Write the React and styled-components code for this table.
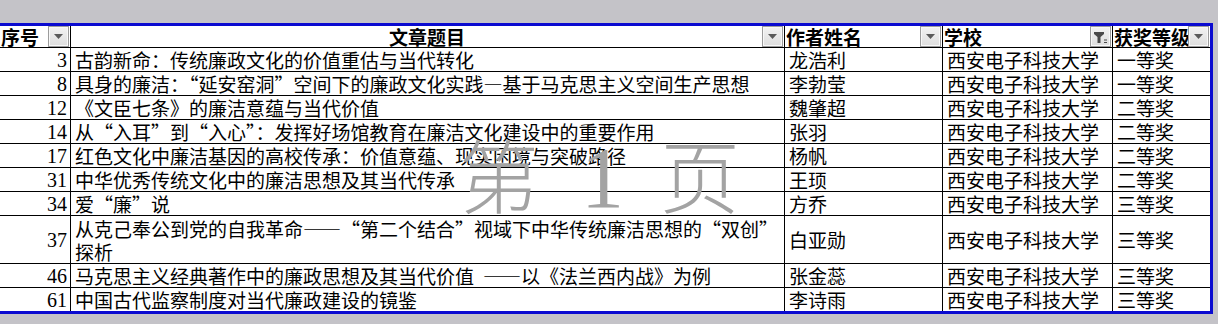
import React from 'react';
import styled, { createGlobalStyle } from 'styled-components';

const rows = [
  { no: 3, title: '古韵新命：传统廉政文化的价值重估与当代转化', name: '龙浩利', award: '一等奖' },
  { no: 8, title: '具身的廉洁：“延安窑洞”空间下的廉政文化实践—基于马克思主义空间生产思想', name: '李勃莹', award: '一等奖' },
  { no: 12, title: '《文臣七条》的廉洁意蕴与当代价值', name: '魏肇超', award: '二等奖' },
  { no: 14, title: '从“入耳”到“入心”：发挥好场馆教育在廉洁文化建设中的重要作用', name: '张羽', award: '二等奖' },
  { no: 17, title: '红色文化中廉洁基因的高校传承：价值意蕴、现实困境与突破路径', name: '杨帆', award: '二等奖' },
  { no: 31, title: '中华优秀传统文化中的廉洁思想及其当代传承', name: '王顼', award: '二等奖' },
  { no: 34, title: '爱“廉”说', name: '方乔', award: '三等奖' },
  { no: 37, title: ['从克己奉公到党的自我革命——“第二个结合”视域下中华传统廉洁思想的“双创”', '探析'], name: '白亚勋', award: '三等奖', tall: true },
  { no: 46, title: '马克思主义经典著作中的廉政思想及其当代价值 ——以《法兰西内战》为例', name: '张金蕊', award: '三等奖' },
  { no: 61, title: '中国古代监察制度对当代廉政建设的镜鉴', name: '李诗雨', award: '三等奖' },
];

const GlobalStyle = createGlobalStyle`
  *, *::before, *::after { box-sizing: border-box; }
  html, body { margin: 0; padding: 0; background: #c4c3c8; }
  body { font-family: "Noto Sans CJK SC", sans-serif; color: #000; }
`;

const Page = styled.div`
  width: 1218px;
  height: 324px;
  overflow: hidden;
  padding-top: 23px;
`;

const Sheet = styled.div`
  position: relative;
  width: 1213px;
  background: #fff;
  border-top: 3px solid #0a0ad0;
  border-right: 3px solid #0a0ad0;
  border-bottom: 3px solid #0a0ad0;
`;

const Row = styled.div`
  display: grid;
  grid-template-columns: 71px 714px 158px 170px 97px;
  height: ${p => p.$h}px;
  border-bottom: ${p => (p.$last ? 'none' : '1px solid #000')};
`;

const Cell = styled.div`
  position: relative;
  display: flex;
  align-items: center;
  justify-content: ${p => p.$align || 'flex-start'};
  padding: 1px 3px 0 4px;
  border-right: 1px solid #000;
  overflow: hidden;
  white-space: nowrap;
  font-size: 19px;
  line-height: 22px;
  font-feature-settings: "fwid";
  &:last-child { border-right: none; }
`;

const HeadCell = styled(Cell)`
  font-weight: 700;
  padding: 0 2px 0 1px;
`;

const NumCell = styled(Cell)`
  justify-content: flex-end;
  padding-right: 3px;
  font-family: "Liberation Serif", serif;
  font-size: 20px;
  font-feature-settings: normal;
`;

const TitleText = styled.div`
  white-space: nowrap;
  line-height: 23px;
`;

const Gap = styled.span`
  display: inline-block;
  width: 9px;
`;

const DropBtn = styled.span`
  position: absolute;
  right: 1px;
  top: 0;
  width: 21px;
  height: 21px;
  display: flex;
  align-items: center;
  justify-content: center;
  border: 1px solid #9c9c9c;
  background: linear-gradient(#f2f2f2, #dedede);
  box-shadow: inset 0 0 0 1px #f8f8f8;
`;

const Watermark = styled.div`
  position: absolute;
  left: 459px;
  top: 106px;
  display: flex;
  align-items: baseline;
  color: #a3a3a3;
  pointer-events: none;
  line-height: 1;
`;

const MarkHan = styled.span`
  font-size: 80px;
  font-family: "Noto Sans CJK SC", sans-serif;
  font-weight: 300;
`;

const MarkNum = styled.span`
  font-size: 86px;
  font-family: "Liberation Serif", serif;
  margin: 0 36px 0 42px;
`;

const Arrow = () => (
  <svg width="9" height="5" viewBox="0 0 9 5">
    <path d="M0 0H9L4.5 5Z" fill="#5a5a5a" />
  </svg>
);

const Funnel = () => (
  <svg width="15" height="14" viewBox="0 0 15 14">
    <path d="M1 2H11V4L7.5 7V13H4.5V7L1 4Z" fill="#4a4a4a" />
    <path d="M11 10H14M11 12.5H14" stroke="#4a4a4a" strokeWidth="1.2" />
  </svg>
);

const renderTitle = t => {
  if (Array.isArray(t)) return <TitleText>{t[0]}<br />{t[1]}</TitleText>;
  if (t.includes(' ')) {
    const [a, b] = t.split(' ');
    return <>{a}<Gap />{b}</>;
  }
  return t;
};

export default function App() {
  return (
    <Page>
      <GlobalStyle />
      <Sheet>
        <Row $h={22}>
          <HeadCell>序号<DropBtn><Arrow /></DropBtn></HeadCell>
          <HeadCell $align="center">文章题目<DropBtn><Arrow /></DropBtn></HeadCell>
          <HeadCell>作者姓名<DropBtn><Arrow /></DropBtn></HeadCell>
          <HeadCell>学校<DropBtn><Funnel /></DropBtn></HeadCell>
          <HeadCell>获奖等级<DropBtn><Arrow /></DropBtn></HeadCell>
        </Row>
        {rows.map((r, i) => (
          <Row key={r.no} $h={r.tall ? 48 : i === rows.length - 1 ? 23 : 24} $last={i === rows.length - 1}>
            <NumCell>{r.no}</NumCell>
            <Cell>{renderTitle(r.title)}</Cell>
            <Cell>{r.name}</Cell>
            <Cell>西安电子科技大学</Cell>
            <Cell>{r.award}</Cell>
          </Row>
        ))}
        <Watermark>
          <MarkHan>第</MarkHan>
          <MarkNum>1</MarkNum>
          <MarkHan>页</MarkHan>
        </Watermark>
      </Sheet>
    </Page>
  );
}
